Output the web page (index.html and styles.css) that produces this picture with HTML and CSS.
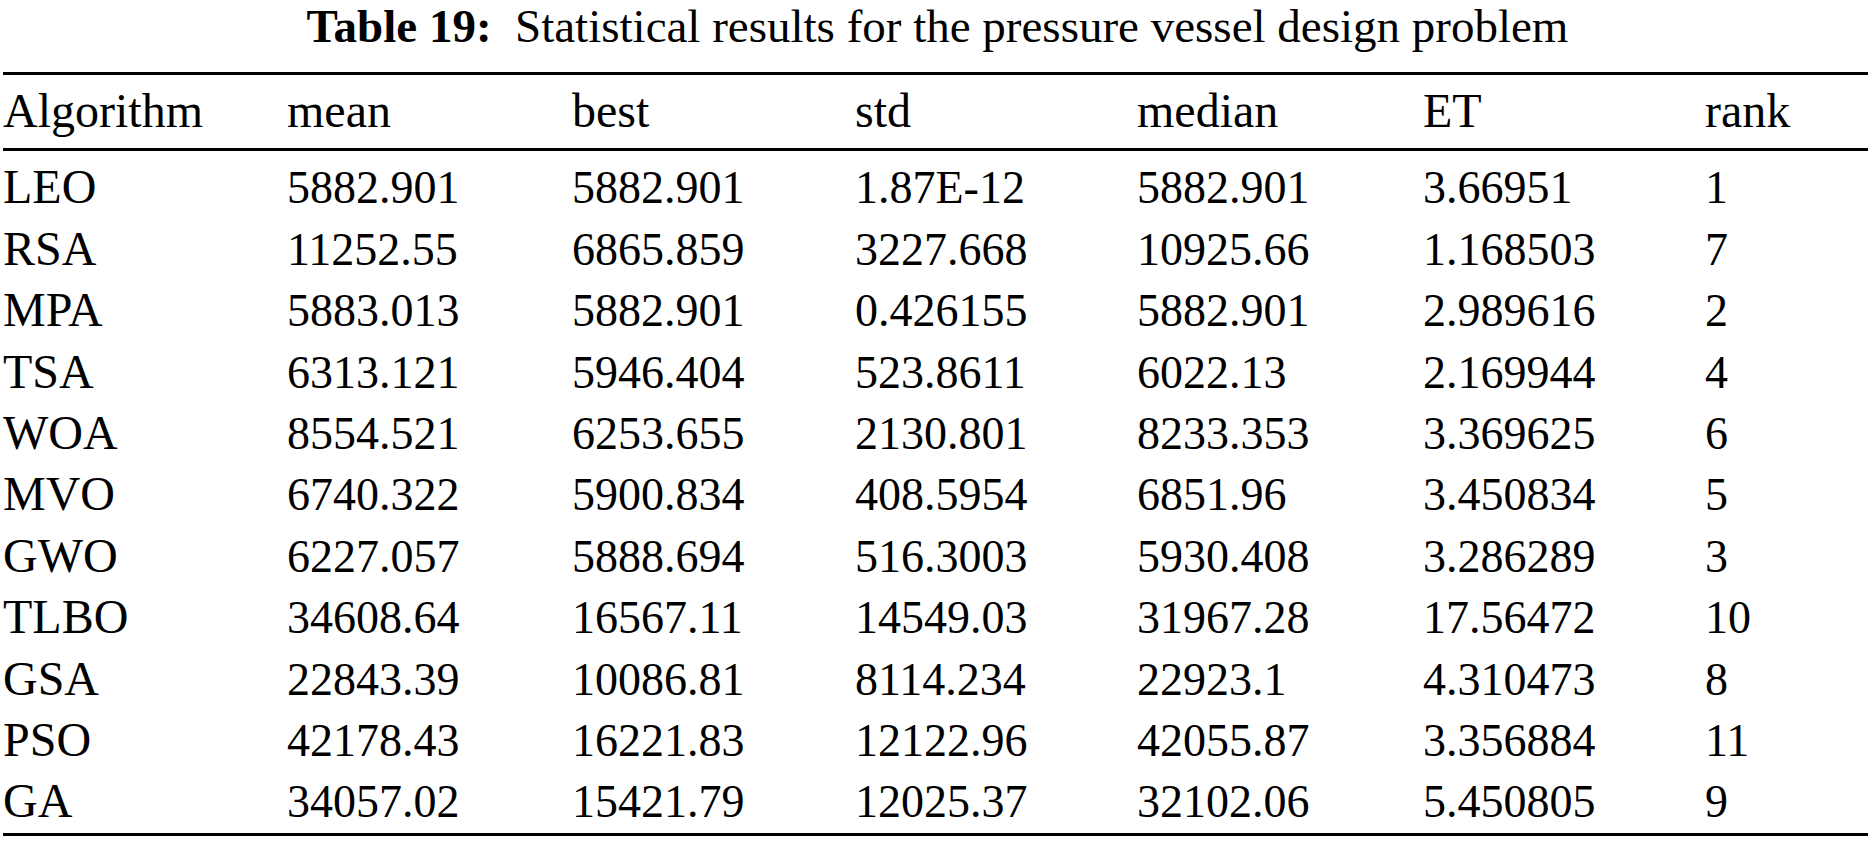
FILE: index.html
```html
<!DOCTYPE html>
<html lang="en">
<head>
<meta charset="utf-8">
<title>Table 19</title>
<link rel="stylesheet" href="styles.css">
</head>
<body>
<div class="page">
  <div class="caption"><span class="label">Table 19:</span><span class="caption-text">Statistical results for the pressure vessel design problem</span></div>
  <table class="results">
    <colgroup>
      <col class="c1"><col class="c2"><col class="c3"><col class="c4"><col class="c5"><col class="c6"><col class="c7">
    </colgroup>
    <thead>
      <tr><th>Algorithm</th><th>mean</th><th>best</th><th>std</th><th>median</th><th>ET</th><th>rank</th></tr>
    </thead>
    <tbody>
      <tr><th>LEO</th><td>5882.901</td><td>5882.901</td><td>1.87E-12</td><td>5882.901</td><td>3.66951</td><td>1</td></tr>
      <tr><th>RSA</th><td>11252.55</td><td>6865.859</td><td>3227.668</td><td>10925.66</td><td>1.168503</td><td>7</td></tr>
      <tr><th>MPA</th><td>5883.013</td><td>5882.901</td><td>0.426155</td><td>5882.901</td><td>2.989616</td><td>2</td></tr>
      <tr><th>TSA</th><td>6313.121</td><td>5946.404</td><td>523.8611</td><td>6022.13</td><td>2.169944</td><td>4</td></tr>
      <tr><th>WOA</th><td>8554.521</td><td>6253.655</td><td>2130.801</td><td>8233.353</td><td>3.369625</td><td>6</td></tr>
      <tr><th>MVO</th><td>6740.322</td><td>5900.834</td><td>408.5954</td><td>6851.96</td><td>3.450834</td><td>5</td></tr>
      <tr><th>GWO</th><td>6227.057</td><td>5888.694</td><td>516.3003</td><td>5930.408</td><td>3.286289</td><td>3</td></tr>
      <tr><th>TLBO</th><td>34608.64</td><td>16567.11</td><td>14549.03</td><td>31967.28</td><td>17.56472</td><td>10</td></tr>
      <tr><th>GSA</th><td>22843.39</td><td>10086.81</td><td>8114.234</td><td>22923.1</td><td>4.310473</td><td>8</td></tr>
      <tr><th>PSO</th><td>42178.43</td><td>16221.83</td><td>12122.96</td><td>42055.87</td><td>3.356884</td><td>11</td></tr>
      <tr><th>GA</th><td>34057.02</td><td>15421.79</td><td>12025.37</td><td>32102.06</td><td>5.450805</td><td>9</td></tr>
    </tbody>
  </table>
</div>
</body>
</html>
```

FILE: styles.css
```css
html, body {
  margin: 0;
  padding: 0;
  background: #ffffff;
}

body {
  font-family: "Liberation Serif", "Times New Roman", serif;
  color: #000000;
}

.page {
  width: 1875px;
}

.caption {
  font-size: 47px;
  line-height: 52px;
  margin-bottom: 20px;
  text-align: center;
  white-space: nowrap;
}

.caption .label {
  font-weight: bold;
  margin-right: 0.5em;
}

.results {
  margin-left: 3px;
  width: 1865px;
  border-collapse: collapse;
  table-layout: fixed;
  font-size: 46px;
  line-height: 61.4px;
  border-top: 3px solid #000;
  border-bottom: 3px solid #000;
}

.results .c1 { width: 284px; }
.results .c2 { width: 285px; }
.results .c3 { width: 283px; }
.results .c4 { width: 282px; }
.results .c5 { width: 286px; }
.results .c6 { width: 282px; }
.results .c7 { width: 163px; }

.results th,
.results td {
  padding: 0;
  text-align: left;
  font-weight: normal;
  white-space: nowrap;
  vertical-align: baseline;
}

.results th {
  font-size: 48px;
  line-height: 58px;
}

.results thead th {
  line-height: 61.4px;
  padding-top: 5px;
  padding-bottom: 7px;
  border-bottom: 3px solid #000;
}

.results tbody tr:first-child th,
.results tbody tr:first-child td {
  padding-top: 6px;
}
```
